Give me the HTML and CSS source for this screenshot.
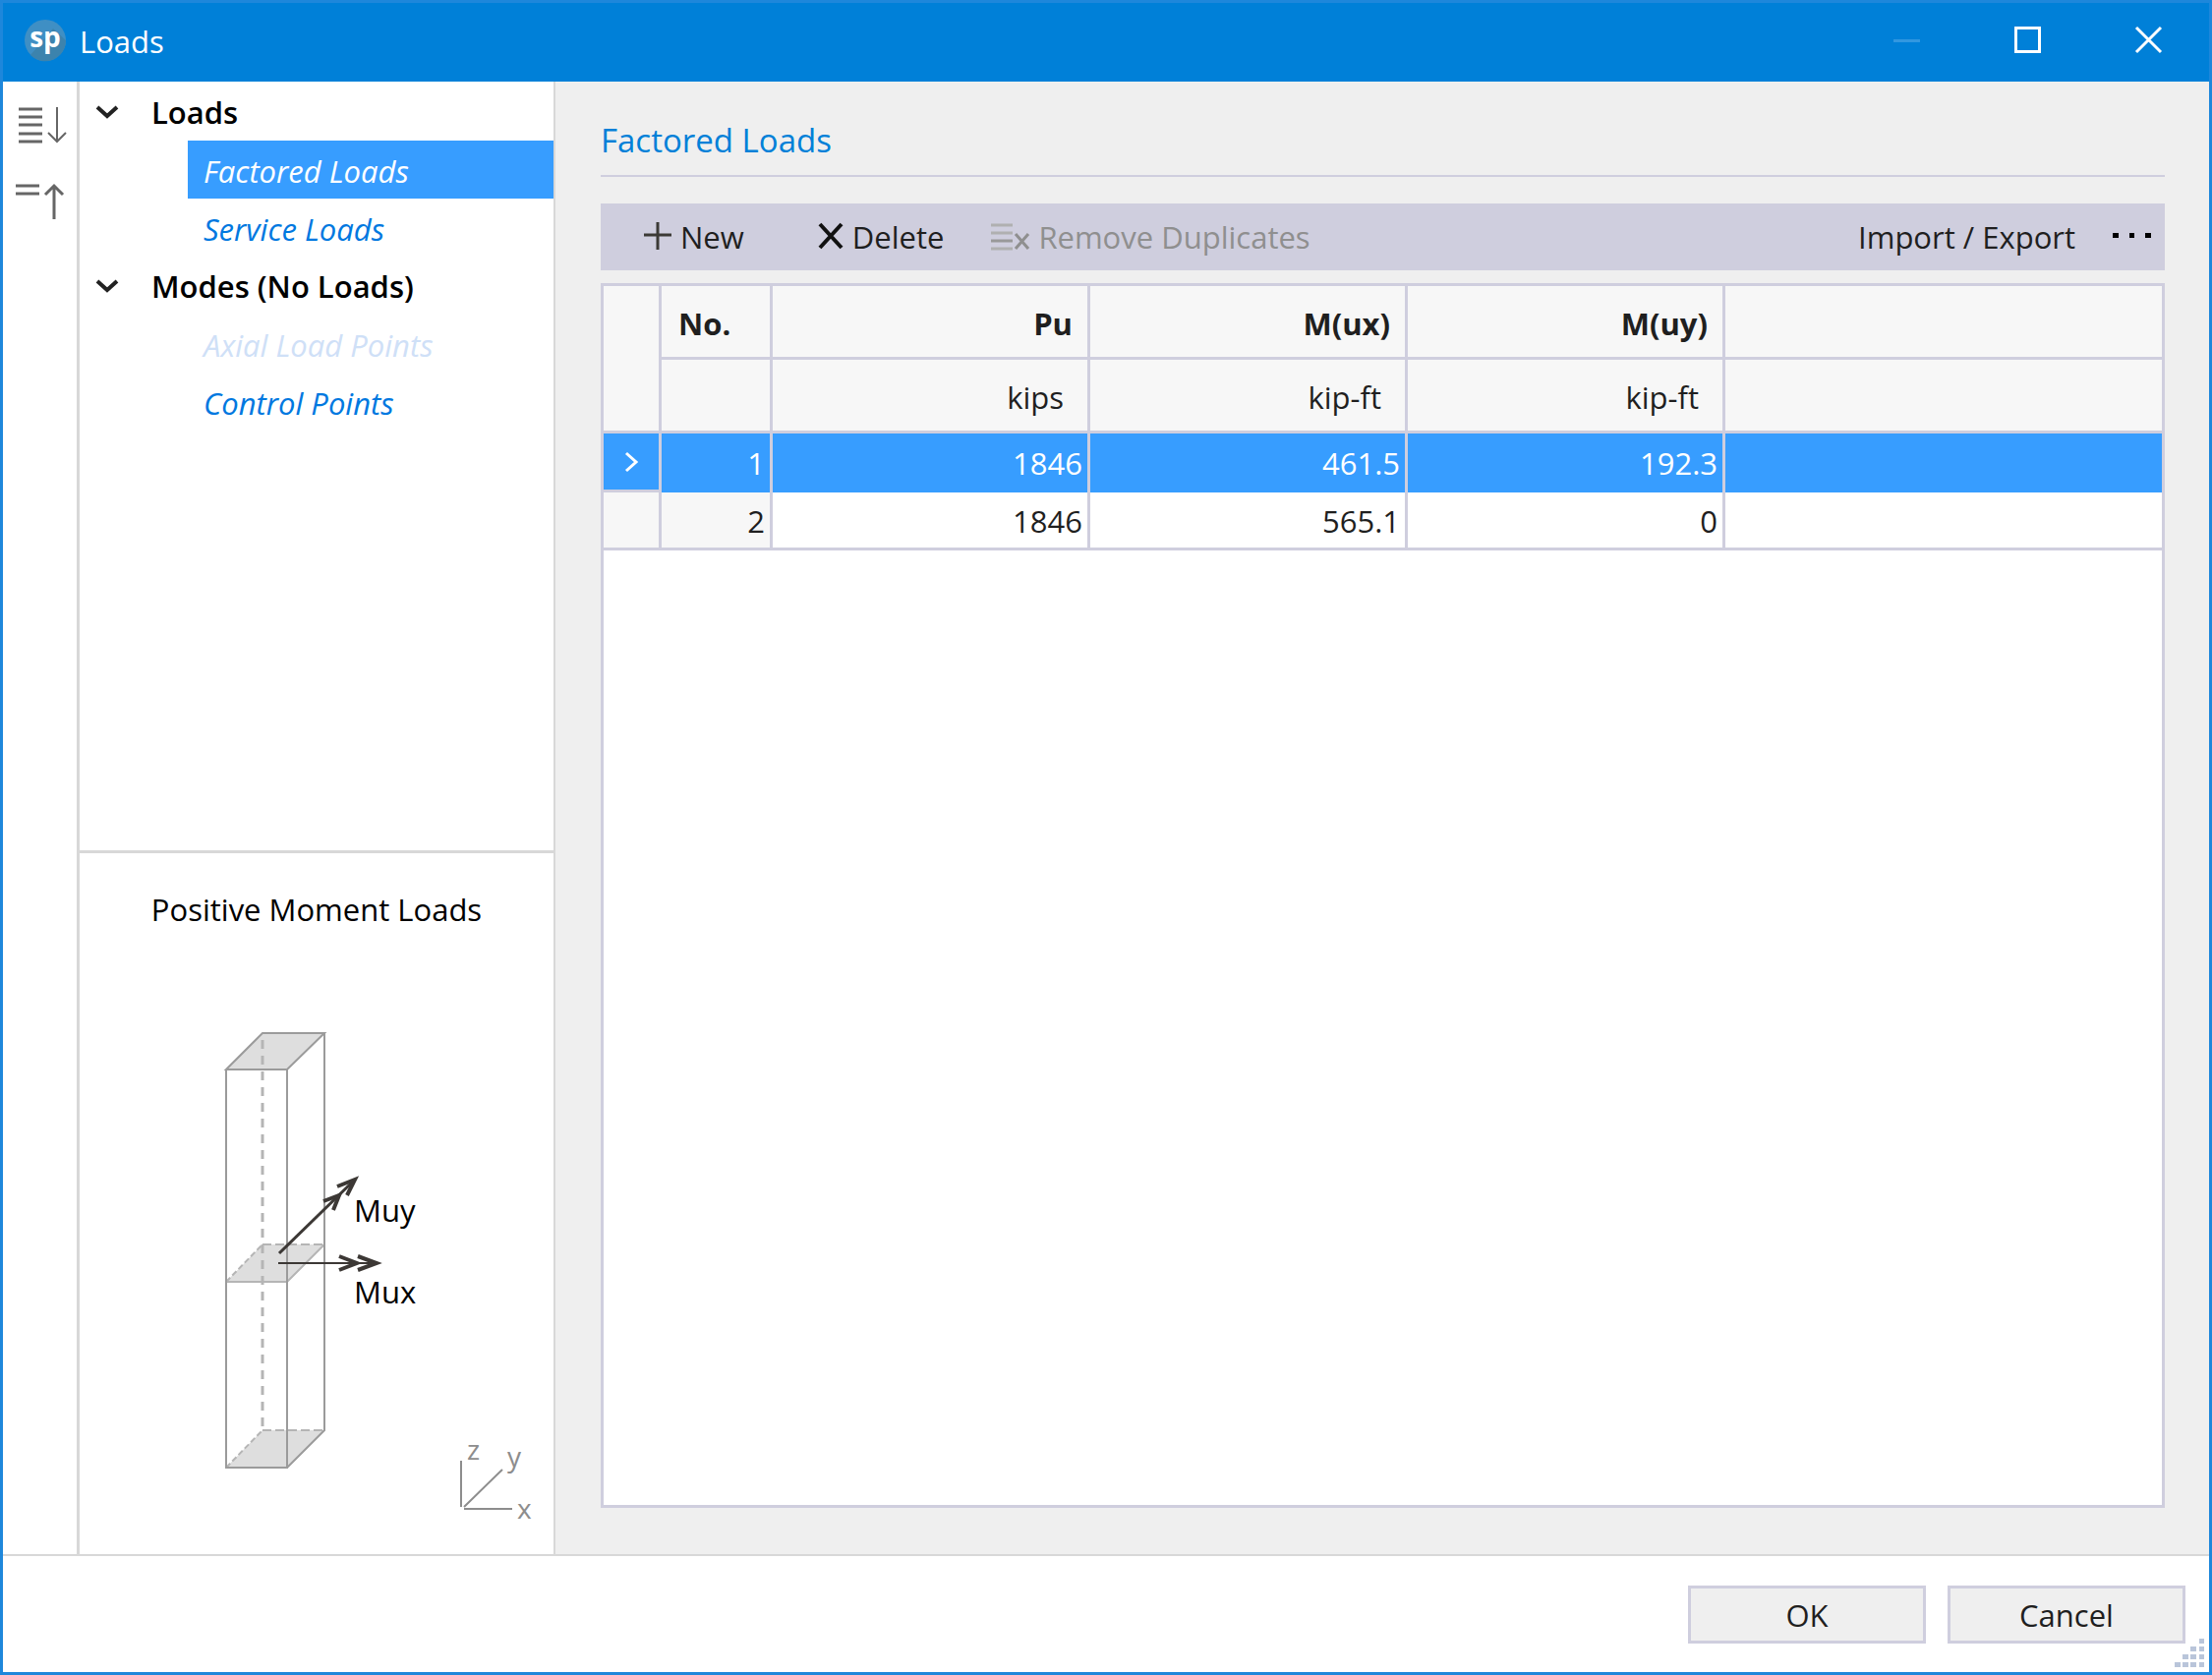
FILE: index.html
```html
<!DOCTYPE html>
<html lang="en">
<head>
    <meta charset="UTF-8">
    <meta name="viewport" content="width=device-width, initial-scale=1.0">
    <title>Loads</title>
    <link rel="stylesheet" href="styles.css">
</head>
<body>
    <div class="window">
        <header class="titlebar">
            <svg class="logo" width="44" height="44" viewBox="0 0 44 44">
                <circle cx="22" cy="22" r="21" fill="#3f8fc4"/>
                <path d="M7 37 A21 21 0 0 0 43 22 L30 10 Z" fill="#3c83ad"/>
                <text x="22" y="29" text-anchor="middle" class="logo-text">sp</text>
            </svg>
            <span class="title">Loads</span>
            <div class="window-buttons">
                <button type="button" aria-label="Minimize" disabled>
                    <svg width="28" height="28" viewBox="0 0 28 28"><path d="M0 14.5H27" stroke="#3297e0" stroke-width="3"/></svg>
                </button>
                <button type="button" aria-label="Maximize">
                    <svg width="28" height="28" viewBox="0 0 28 28"><rect x="1.5" y="1.5" width="24" height="24" fill="none" stroke="#fff" stroke-width="3"/></svg>
                </button>
                <button type="button" aria-label="Close">
                    <svg width="28" height="28" viewBox="0 0 28 28"><path d="M1 1L26 26M26 1L1 26" stroke="#fff" stroke-width="3"/></svg>
                </button>
            </div>
        </header>

        <div class="body">
            <div class="rail">
                <button type="button" aria-label="Expand all">
                    <svg width="50" height="38" viewBox="0 0 50 38" fill="none" stroke="#666" stroke-width="3">
                        <path d="M3 2H27M3 10H27M3 18H27M3 27H27M3 35H27"/>
                        <path d="M42 0V34M33 26L42 35L51 26" stroke-width="2"/>
                    </svg>
                </button>
                <button type="button" aria-label="Collapse all">
                    <svg width="50" height="38" viewBox="0 0 50 38" fill="none" stroke="#666" stroke-width="3">
                        <path d="M0 2H24M0 10H24"/>
                        <path d="M39 36V2M30 11L39 2L48 11"/>
                    </svg>
                </button>
            </div>

            <aside class="side">
                <nav class="tree">
                    <button type="button" class="group">
                        <svg width="24" height="16" viewBox="0 0 24 16"><path d="M2 3L12 12L22 3" fill="none" stroke="#222" stroke-width="4"/></svg>
                        Loads
                    </button>
                    <a href="#factored" class="item selected">Factored Loads</a>
                    <a href="#service" class="item">Service Loads</a>
                    <button type="button" class="group">
                        <svg width="24" height="16" viewBox="0 0 24 16"><path d="M2 3L12 12L22 3" fill="none" stroke="#222" stroke-width="4"/></svg>
                        Modes (No Loads)
                    </button>
                    <a href="#axial" class="item disabled">Axial Load Points</a>
                    <a href="#control" class="item">Control Points</a>
                </nav>
                <section class="preview">
                    <h2>Positive Moment Loads</h2>
                    <svg class="diagram" viewBox="81 1030 482 551">
                        <!-- section planes -->
                        <g fill="#dedede">
                            <path d="M230 1089L267 1052H330L292 1089Z"/>
                            <path d="M230 1305L267 1267H330L292 1305Z"/>
                            <path d="M230 1494L267 1456H330L292 1494Z"/>
                        </g>
                        <!-- hidden edges -->
                        <g fill="none" stroke="#b5b5b5" stroke-width="2">
                            <path d="M267 1059V1456" stroke-width="3" stroke-dasharray="9 7"/>
                            <path d="M267 1267H330M267 1456H330" stroke-dasharray="9 4"/>
                            <path d="M230 1305L267 1267M230 1494L267 1456" stroke-dasharray="6 3"/>
                            <path d="M230 1305H292L330 1267"/>
                        </g>
                        <!-- visible edges -->
                        <g fill="none" stroke="#9b9b9b" stroke-width="2">
                            <path d="M230 1089L267 1052H330L292 1089ZM230 1089V1494H292V1089M330 1052V1456L292 1494"/>
                        </g>
                        <!-- moment arrows -->
                        <g fill="none" stroke="#3c3835" stroke-width="2">
                            <path d="M283 1286H384"/>
                            <path d="M284 1276L361 1201" stroke-width="3"/>
                            <path d="M345 1279L363 1286L345 1293M364 1279L383 1286L364 1293" stroke-width="4"/>
                            <path d="M329 1223L345 1217L339 1232M343 1208L361 1201L353 1217" stroke-width="4"/>
                        </g>
                        <text x="360" y="1244">Muy</text>
                        <text x="360" y="1327">Mux</text>
                        <!-- axes -->
                        <path d="M469 1487V1534M472 1536H521M472 1534L511 1496" fill="none" stroke="#8d8d8d" stroke-width="2"/>
                        <g class="axis">
                            <text x="475" y="1486">z</text>
                            <text x="516" y="1493">y</text>
                            <text x="526" y="1546">x</text>
                        </g>
                    </svg>
                </section>
            </aside>

            <main class="content">
                <h1>Factored Loads</h1>
                <div class="toolbar">
                    <button type="button" class="new">
                        <svg width="30" height="30" viewBox="0 0 30 30"><path d="M1 13H29M15 0V28" stroke="#3c3a36" stroke-width="3"/></svg>
                        New
                    </button>
                    <button type="button" class="delete">
                        <svg width="27" height="27" viewBox="0 0 27 27"><path d="M2 0L24 24M24 0L2 24" stroke="#111" stroke-width="4"/></svg>
                        Delete
                    </button>
                    <button type="button" class="dup" disabled>
                        <svg width="40" height="28" viewBox="0 0 40 28" fill="none" stroke="#b0b0b0" stroke-width="3">
                            <path d="M0 2H22M0 10H22M0 26H22"/>
                            <path d="M0 18H22" stroke="#999"/>
                            <path d="M25 11L38 26M38 11L25 26" stroke="#8f8f8f"/>
                        </svg>
                        Remove Duplicates
                    </button>
                    <button type="button" class="export">
                        Import / Export
                        <svg width="40" height="8" viewBox="0 0 40 8"><path d="M0 0H6V5H0ZM17 0H22V5H17ZM33 0H39V5H33Z"/></svg>
                    </button>
                </div>
                <div class="grid">
                    <table>
                        <colgroup>
                            <col class="col-mark">
                            <col class="col-no">
                            <col class="col-num">
                            <col class="col-num">
                            <col class="col-num">
                            <col>
                        </colgroup>
                        <thead>
                            <tr>
                                <td rowspan="2"></td>
                                <th class="no">No.</th>
                                <th>Pu</th>
                                <th>M(ux)</th>
                                <th>M(uy)</th>
                                <td></td>
                            </tr>
                            <tr class="units">
                                <td></td>
                                <td>kips</td>
                                <td>kip-ft</td>
                                <td>kip-ft</td>
                                <td></td>
                            </tr>
                        </thead>
                        <tbody>
                            <tr class="current">
                                <td class="mark"><svg width="16" height="20" viewBox="0 0 16 20"><path d="M3 1L13 10L3 19" fill="none" stroke="#fff" stroke-width="3"/></svg></td>
                                <td>1</td>
                                <td>1846</td>
                                <td>461.5</td>
                                <td>192.3</td>
                                <td></td>
                            </tr>
                            <tr>
                                <td class="mark"></td>
                                <td class="row-no">2</td>
                                <td>1846</td>
                                <td>565.1</td>
                                <td>0</td>
                                <td></td>
                            </tr>
                        </tbody>
                    </table>
                </div>
            </main>
        </div>

        <footer class="footer">
            <button type="button">OK</button>
            <button type="button">Cancel</button>
            <svg class="grip" width="30" height="30" viewBox="0 0 30 30" fill="#b9c5da">
                <path d="M25 0H30V5H25ZM16 8H22V13H16ZM25 8H30V13H25ZM8 16H14V21H8ZM16 16H22V21H16ZM25 16H30V21H25ZM0 24H6V29H0ZM8 24H14V29H8ZM16 24H22V29H16ZM25 24H30V29H25Z"/>
            </svg>
        </footer>
    </div>
</body>
</html>
```
FILE: styles.css
```css
* {
    box-sizing: border-box;
}

body {
    margin: 0;
    font-family: "Open Sans", "Noto Sans", sans-serif;
    font-size: 31px;
    line-height: 40px;
    color: #1f1f1f;
}

button {
    font: inherit;
    color: inherit;
    background: none;
    border: none;
    padding: 0;
}

svg {
    flex-shrink: 0;
    overflow: visible;
}

.window {
    display: flex;
    flex-direction: column;
    height: 100vh;
    border: 3px solid #1e87db;
    background: #fff;
}

/* Title bar */
.titlebar {
    display: flex;
    align-items: center;
    height: 80px;
    padding-left: 21px;
    background: #0080d8;
    color: #fff;
}

.logo {
    margin-bottom: 4px;
}

.logo-text {
    font-size: 28px;
    font-weight: bold;
    fill: #fff;
}

.title {
    margin: 0 0 2px 13px;
}

.window-buttons {
    display: flex;
    height: 100%;
    margin-left: auto;
}

.window-buttons button {
    display: flex;
    align-items: center;
    justify-content: center;
    width: 123px;
    padding-bottom: 4px;
}

.body {
    display: flex;
    flex: 1;
    min-height: 0;
}

/* Left icon rail */
.rail {
    display: flex;
    flex-direction: column;
    align-items: center;
    gap: 40px;
    width: 78px;
    padding-top: 26px;
    border-right: 3px solid #d8d8d8;
}

.rail button {
    height: 38px;
}

.rail svg {
    display: block;
}

/* Tree and preview */
.side {
    display: flex;
    flex-direction: column;
    width: 484px;
    border-right: 2px solid #d8d8d8;
}

.tree {
    display: flex;
    flex: 1;
    flex-direction: column;
    padding-top: 1px;
}

.group {
    display: flex;
    align-items: center;
    gap: 33px;
    height: 59px;
    padding-left: 16px;
    font-weight: 600;
    color: #000;
}

.item {
    height: 59px;
    margin-left: 110px;
    padding: 11px 0 0 16px;
    font-style: italic;
    color: #0078e0;
    text-decoration: none;
}

.item.selected {
    background: #379dff;
    color: #fff;
}

.item.disabled {
    color: #cfe0f7;
}

.preview {
    height: 716px;
    padding-top: 37px;
    border-top: 3px solid #d8d8d8;
}

.preview h2 {
    margin: 0;
    font-size: 31px;
    font-weight: normal;
    text-align: center;
    color: #000;
}

.diagram {
    display: block;
    width: 100%;
    margin-top: 84px;
}

.axis text {
    font-size: 28px;
    fill: #8d8d8d;
}

/* Main area */
.content {
    display: flex;
    flex: 1;
    flex-direction: column;
    padding: 40px 45px 47px 46px;
    background: #efefef;
}

h1 {
    margin: 0 0 27px;
    padding-bottom: 15px;
    border-bottom: 2px solid #cfcede;
    font-size: 33px;
    font-weight: 500;
    color: #0080d8;
}

.toolbar {
    display: flex;
    align-items: center;
    height: 68px;
    margin-bottom: 13px;
    padding: 0 13px 0 43px;
    background: #cfcede;
}

.toolbar button {
    display: flex;
    align-items: center;
    gap: 8px;
}

.toolbar .delete {
    margin-left: 75px;
}

.toolbar .dup {
    margin-left: 48px;
    color: #8f8f8f;
}

.toolbar .export {
    gap: 38px;
    margin-left: auto;
}

.grid {
    flex: 1;
    border: 3px solid #cfcede;
    background: #fff;
}

table {
    width: 100%;
    table-layout: fixed;
    border-spacing: 0;
}

.col-mark {
    width: 59px;
}

.col-no {
    width: 113px;
}

.col-num {
    width: 323px;
}

th,
td {
    height: 59px;
    padding: 2px 5px 0 0;
    border-right: 3px solid #cfcede;
    border-bottom: 3px solid #cfcede;
    text-align: right;
}

th:last-child,
td:last-child {
    border-right: none;
}

thead th,
thead td {
    height: 75px;
    padding: 4px 15px 0 17px;
    background: #f7f7f7;
}

th {
    font-weight: bold;
}

th.no {
    text-align: left;
}

.units td {
    padding-right: 24px;
}

.current td {
    height: 60px;
    padding-top: 0;
    border-bottom: none;
    background: #379dff;
    color: #fff;
}

.current .mark {
    border-bottom: 3px solid #cfcede;
}

td.mark {
    padding: 0;
}

.mark svg {
    display: block;
    margin: 0 auto;
}

.mark,
.row-no {
    background: #f7f7f7;
}

/* Footer */
.footer {
    position: relative;
    display: flex;
    justify-content: flex-end;
    gap: 22px;
    height: 120px;
    padding: 30px 24px 0 0;
    border-top: 2px solid #d8d8d8;
}

.footer button {
    width: 242px;
    height: 59px;
    border: 3px solid #cfcede;
    background: #efefef;
}

.grip {
    position: absolute;
    right: 5px;
    bottom: 4px;
}
```
